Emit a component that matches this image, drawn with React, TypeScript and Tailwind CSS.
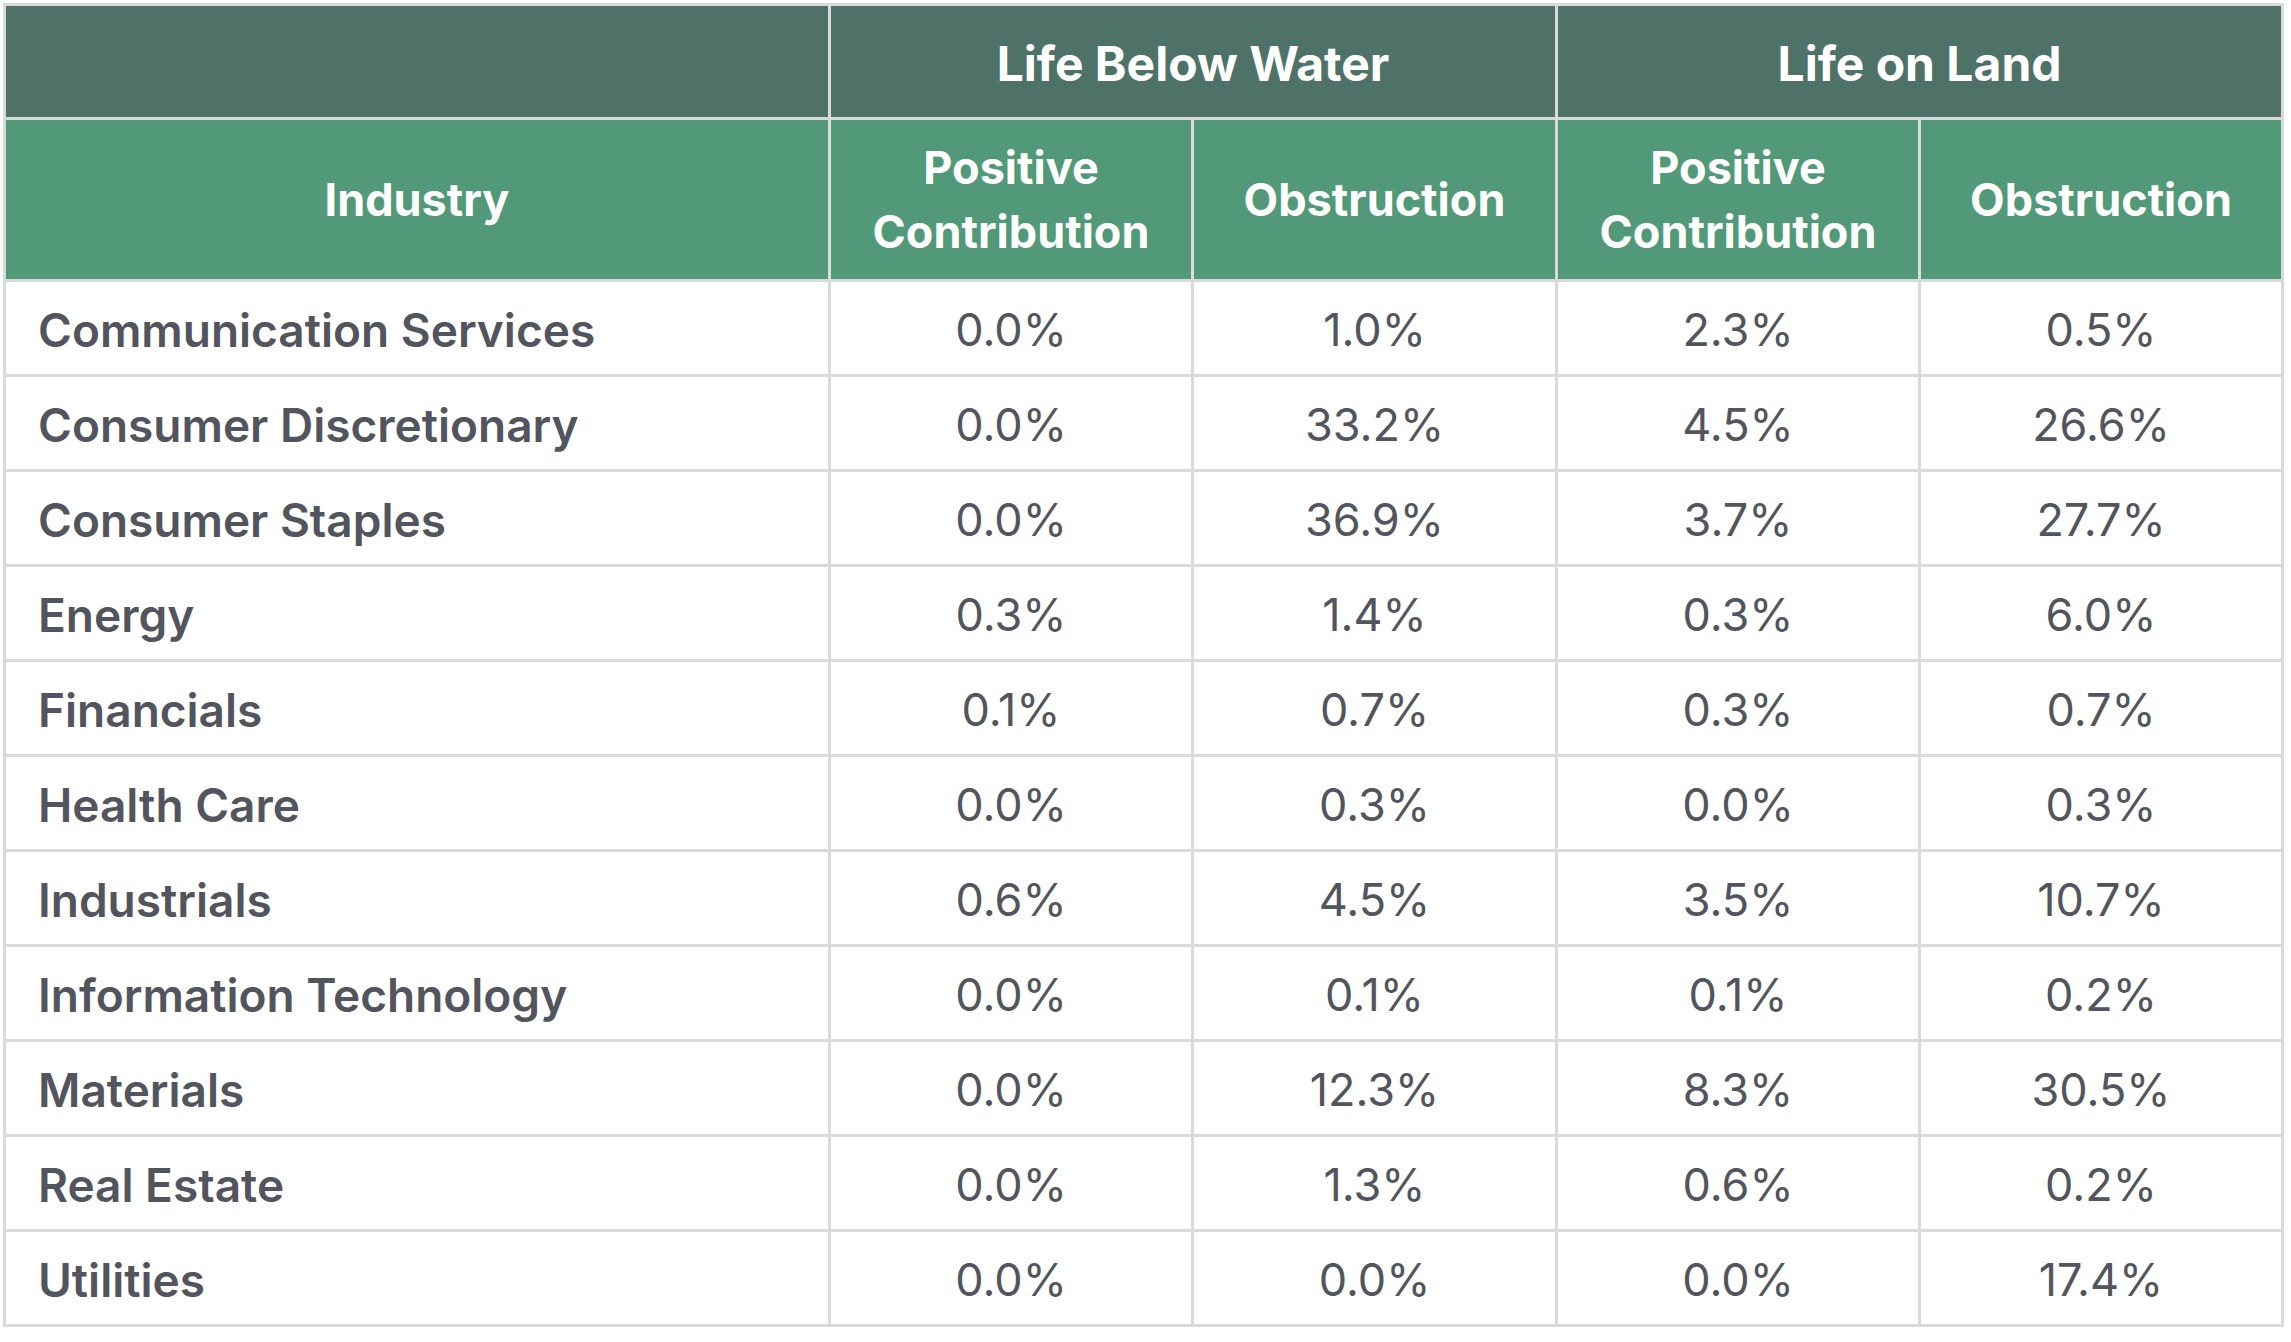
const rows: [string, string, string, string, string][] = [
  ["Communication Services", "0.0%", "1.0%", "2.3%", "0.5%"],
  ["Consumer Discretionary", "0.0%", "33.2%", "4.5%", "26.6%"],
  ["Consumer Staples", "0.0%", "36.9%", "3.7%", "27.7%"],
  ["Energy", "0.3%", "1.4%", "0.3%", "6.0%"],
  ["Financials", "0.1%", "0.7%", "0.3%", "0.7%"],
  ["Health Care", "0.0%", "0.3%", "0.0%", "0.3%"],
  ["Industrials", "0.6%", "4.5%", "3.5%", "10.7%"],
  ["Information Technology", "0.0%", "0.1%", "0.1%", "0.2%"],
  ["Materials", "0.0%", "12.3%", "8.3%", "30.5%"],
  ["Real Estate", "0.0%", "1.3%", "0.6%", "0.2%"],
  ["Utilities", "0.0%", "0.0%", "0.0%", "17.4%"],
];

const App = () => {
  return (
    <div className="min-h-screen bg-white p-[3px] font-['Inter','Noto_Sans',sans-serif]">
      <table className="w-[2281px] table-fixed border-collapse border-[3px] border-[#dadada]">
        <colgroup>
          <col className="w-[825px]" />
          <col className="w-[363px]" />
          <col className="w-[364px]" />
          <col className="w-[363px]" />
          <col className="w-[363px]" />
        </colgroup>
        <thead>
          <tr className="h-[114px] bg-[#4f7268] text-[48px] font-bold text-white">
            <th className="border-[3px] border-[#dadada]" />
            <th colSpan={2} className="border-[3px] border-[#dadada] pt-1">
              Life Below Water
            </th>
            <th colSpan={2} className="border-[3px] border-[#dadada] pt-1">
              Life on Land
            </th>
          </tr>
          <tr className="h-[162px] bg-[#52997a] text-[45px] font-bold leading-[64px] text-white">
            <th className="border-[3px] border-[#dadada]">Industry</th>
            <th className="border-[3px] border-[#dadada]">
              Positive
              <br />
              Contribution
            </th>
            <th className="border-[3px] border-[#dadada]">Obstruction</th>
            <th className="border-[3px] border-[#dadada]">
              Positive
              <br />
              Contribution
            </th>
            <th className="border-[3px] border-[#dadada]">Obstruction</th>
          </tr>
        </thead>
        <tbody className="text-[45px] text-[#52555d]">
          {rows.map((r) => (
            <tr key={r[0]} className="h-[95px]">
              <td className="border-[3px] border-[#dadada] pt-1 pl-8 text-[46px] font-semibold">{r[0]}</td>
              {r.slice(1).map((v, i) => (
                <td key={i} className="border-[3px] border-[#dadada] pt-1 text-center">
                  {v}
                </td>
              ))}
            </tr>
          ))}
        </tbody>
      </table>
    </div>
  );
};

export default App;
